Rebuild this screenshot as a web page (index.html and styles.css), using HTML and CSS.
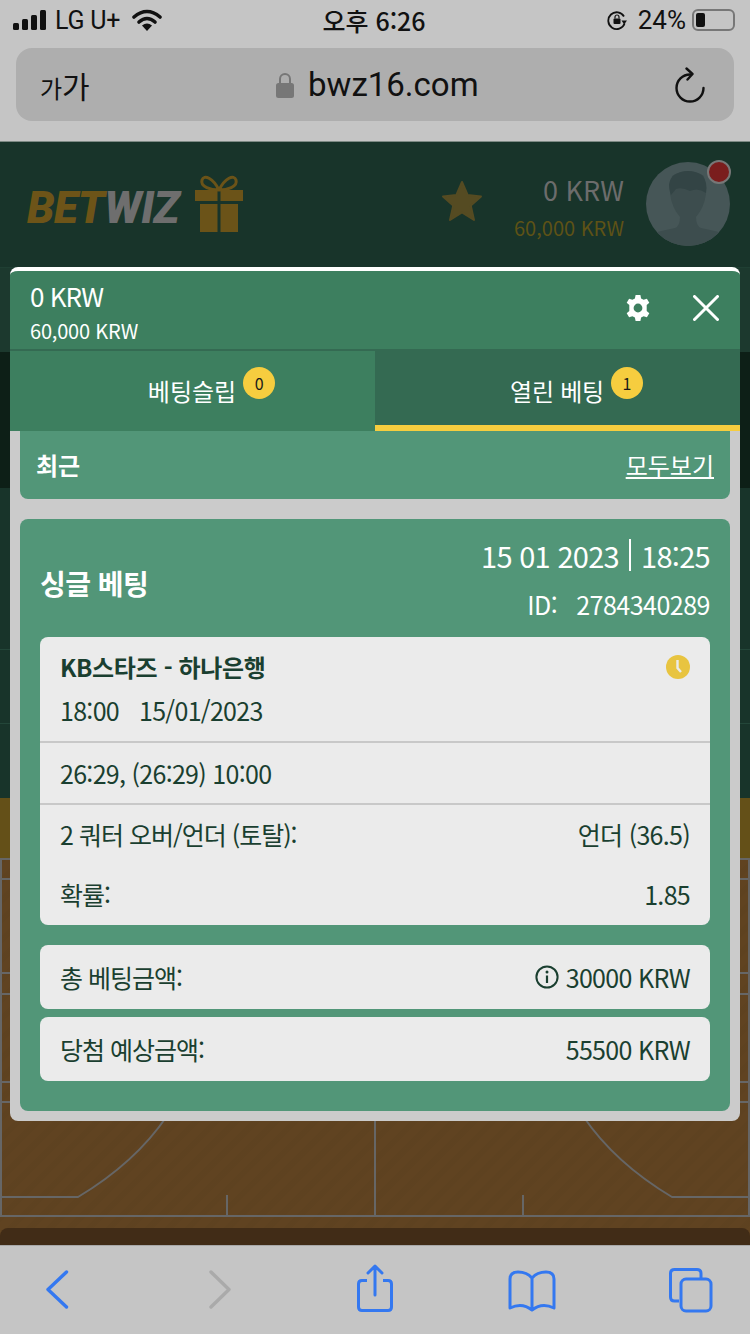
FILE: index.html
```html
<!DOCTYPE html>
<html lang="ko">
<head>
    <meta charset="UTF-8">
    <meta name="viewport" content="width=device-width, initial-scale=1.0">
    <title>BETWIZ</title>
    <link rel="stylesheet" href="styles.css">
</head>
<body>
    <div class="phone">
        <div class="browser-top">
            <div class="status-bar">
                <div class="status-left">
                    <svg class="signal" width="33" height="20" viewBox="0 0 33 20">
                        <rect x="0" y="13" width="6" height="7" rx="1.5"/>
                        <rect x="9" y="9" width="6" height="11" rx="1.5"/>
                        <rect x="18" y="5" width="6" height="15" rx="1.5"/>
                        <rect x="27" y="0" width="6" height="20" rx="1.5"/>
                    </svg>
                    <span>LG U+</span>
                    <svg class="wifi" width="30" height="22" viewBox="0 0 30 22">
                        <path d="M2 8 Q15 -3 28 8" fill="none" stroke="#111" stroke-width="3.6" stroke-linecap="round"/>
                        <path d="M7 13 Q15 6 23 13" fill="none" stroke="#111" stroke-width="3.6" stroke-linecap="round"/>
                        <path d="M15 22 L10 16.5 Q15 12.5 20 16.5 Z" fill="#111"/>
                    </svg>
                </div>
                <div class="status-time">오후 6:26</div>
                <div class="status-right">
                    <svg class="rotate-lock" width="20" height="20" viewBox="0 0 20 20">
                        <path d="M17 6.5 A8.4 8.4 0 1 0 17.6 13.5" fill="none" stroke="#111" stroke-width="1.8"/>
                        <path d="M14.5 10.5 L20 10.5 L17.2 14.5 Z" fill="#111"/>
                        <rect x="6.5" y="8.5" width="7" height="5.5" rx="1" fill="#111"/>
                        <path d="M8 8.5 V7 A2 2 0 0 1 12 7 V8.5" fill="none" stroke="#111" stroke-width="1.2"/>
                    </svg>
                    <span>24%</span>
                    <div class="battery"><div class="battery-fill"></div></div>
                </div>
            </div>
            <div class="url-bar">
                <span class="url-aa"><small>가</small>가</span>
                <div class="url-host">
                    <svg width="18" height="26" viewBox="0 0 18 26">
                        <path d="M4 12 V7 A5 5 0 0 1 14 7 V12" fill="none" stroke="#777" stroke-width="2"/>
                        <rect x="0" y="11" width="18" height="15" rx="2.5" fill="#777"/>
                    </svg>
                    <span>bwz16.com</span>
                </div>
                <svg class="reload" width="30" height="36" viewBox="0 0 30 36">
                    <path d="M15 7.5 A13.5 13.5 0 1 0 28.5 21" fill="none" stroke="#111" stroke-width="2.4" stroke-linecap="round"/>
                    <path d="M11.5 1.5 L17.5 7 L12.5 12.5" fill="none" stroke="#111" stroke-width="2.4" stroke-linecap="round" stroke-linejoin="round"/>
                </svg>
            </div>
        </div>

        <div class="site">
            <header class="site-header">
                <div class="logo">
                    <span class="logo-text"><span class="logo-bet">BET</span>WIZ</span>
                    <svg class="gift" width="48" height="58" viewBox="0 0 48 58">
                        <path d="M24 15 C18 3 9 -1 7 5 C5 12 16 15 24 15 C32 15 43 12 41 5 C39 -1 30 3 24 15" fill="none" stroke="#6b5318" stroke-width="3"/>
                        <rect x="0" y="15" width="22.5" height="11" fill="#6b5318"/>
                        <rect x="25.5" y="15" width="22.5" height="11" fill="#6b5318"/>
                        <rect x="5" y="29" width="17.5" height="28" fill="#6b5318"/>
                        <rect x="25.5" y="29" width="17.5" height="28" fill="#6b5318"/>
                    </svg>
                </div>
                <div class="account">
                    <svg class="fav" width="42" height="42" viewBox="0 0 42 42">
                        <path d="M21 2 L26.6 15 L40 16.4 L29.8 25.6 L33 40 L21 32.4 L9 40 L12.2 25.6 L2 16.4 L15.4 15 Z" fill="#554b22" stroke="#554b22" stroke-width="2" stroke-linejoin="round"/>
                    </svg>
                    <div class="account-money">
                        <div class="account-real">0 KRW</div>
                        <div class="account-bonus">60,000 KRW</div>
                    </div>
                    <div class="avatar">
                        <svg width="84" height="84" viewBox="0 0 84 84">
                            <path d="M0 84 V74 Q12 69 29 66 Q34 64 34 55 Q26 46 24 32 L26 14 Q42 4 58 14 L60 32 Q58 46 50 55 Q50 64 55 66 Q72 69 84 74 V84 Z" fill="#3d4d4e"/>
                            <path d="M25 33 Q20 20 28 13 Q42 5 56 13 Q62 20 60 31 Q52 25 44 29 Q36 25 30 27 Z" fill="#334445"/>
                        </svg>
                        <span class="avatar-dot"></span>
                    </div>
                </div>
            </header>
            <div class="band band-soft"></div>
            <div class="band band-dark"></div>
            <div class="band band-row band-row-short"></div>
            <div class="band band-row"></div>
            <div class="band band-last"></div>
            <div class="band band-olive"></div>
            <div class="court">
                <svg width="750" height="387" viewBox="0 0 750 387">
                    <g fill="none" stroke="#666" stroke-width="2">
                        <path d="M1 0 V358"/>
                        <path d="M749 0 V358"/>
                        <path d="M0 1 H750"/>
                        <path d="M0 21 H12 M738 21 H750"/>
                        <path d="M0 115 H12 M738 115 H750"/>
                        <path d="M0 136 H12 M738 136 H750"/>
                        <path d="M0 224 H12 M738 224 H750"/>
                        <path d="M0 244 H12 M738 244 H750"/>
                        <path d="M0 358 H750"/>
                        <path d="M375 250 V358"/>
                        <path d="M227 337 V358"/>
                        <path d="M523 337 V358"/>
                        <path d="M0 339 H78 Q135 305 167 258"/>
                        <path d="M750 339 H672 Q615 305 583 258"/>
                    </g>
                </svg>
                <div class="court-panel"></div>
            </div>

            <aside class="slip">
                <div class="slip-head">
                    <div class="slip-money">
                        <div class="slip-real">0 KRW</div>
                        <div class="slip-bonus">60,000 KRW</div>
                    </div>
                    <div class="slip-actions">
                        <svg width="26" height="26" viewBox="0 0 26 26">
                            <path fill="#fff" fill-rule="evenodd" d="M10.6 0 H15.4 L16.1 3.4 L18.6 4.8 L21.9 3.7 L24.3 7.8 L21.7 10.1 V13 V15.9 L24.3 18.2 L21.9 22.3 L18.6 21.2 L16.1 22.6 L15.4 26 H10.6 L9.9 22.6 L7.4 21.2 L4.1 22.3 L1.7 18.2 L4.3 15.9 V10.1 L1.7 7.8 L4.1 3.7 L7.4 4.8 L9.9 3.4 Z M13 8.6 A4.4 4.4 0 1 0 13 17.4 A4.4 4.4 0 1 0 13 8.6 Z"/>
                        </svg>
                        <svg width="26" height="26" viewBox="0 0 26 26">
                            <path d="M1.5 1.5 L24.5 24.5 M24.5 1.5 L1.5 24.5" stroke="#fff" stroke-width="3" stroke-linecap="round"/>
                        </svg>
                    </div>
                </div>
                <div class="slip-tabs">
                    <div class="slip-tab">
                        <span>베팅슬립</span>
                        <span class="tab-count">0</span>
                    </div>
                    <div class="slip-tab slip-tab-active">
                        <span>열린 베팅</span>
                        <span class="tab-count">1</span>
                    </div>
                </div>
                <div class="slip-body">
                    <div class="recent">
                        <strong>최근</strong>
                        <a href="#">모두보기</a>
                    </div>
                    <div class="bet-card">
                        <div class="bet-head">
                            <h2>싱글 베팅</h2>
                            <div class="bet-meta">
                                <div class="bet-date">15 01 2023 <i></i> 18:25</div>
                                <div class="bet-id"><span>ID:</span><span>2784340289</span></div>
                            </div>
                        </div>
                        <div class="bet-detail">
                            <div class="bet-match">
                                <div class="match-top">
                                    <strong>KB스타즈 - 하나은행</strong>
                                    <svg width="24" height="24" viewBox="0 0 24 24">
                                        <circle cx="12" cy="12" r="12" fill="#e8c440"/>
                                        <path d="M11.5 5 V13 L15 17" fill="none" stroke="#ebebeb" stroke-width="2.4"/>
                                    </svg>
                                </div>
                                <div class="match-time"><span>18:00</span><span>15/01/2023</span></div>
                            </div>
                            <div class="bet-score">26:29, (26:29) 10:00</div>
                            <div class="bet-lines">
                                <div class="line-row"><span>2 쿼터 오버/언더 (토탈):</span><span>언더 (36.5)</span></div>
                                <div class="line-row"><span>확률:</span><span>1.85</span></div>
                            </div>
                        </div>
                        <div class="bet-sum bet-sum-first">
                            <span>총 베팅금액:</span>
                            <span class="sum-value">
                                <svg width="24" height="24" viewBox="0 0 24 24">
                                    <circle cx="12" cy="12" r="10.6" fill="none" stroke="#1a3f30" stroke-width="2"/>
                                    <path d="M12 10.5 V18" stroke="#1a3f30" stroke-width="2.2"/>
                                    <circle cx="12" cy="7" r="1.5" fill="#1a3f30"/>
                                </svg>
                                30000 KRW
                            </span>
                        </div>
                        <div class="bet-sum">
                            <span>당첨 예상금액:</span>
                            <span class="sum-value">55500 KRW</span>
                        </div>
                    </div>
                </div>
            </aside>
        </div>

        <nav class="browser-bottom">
            <svg width="60" height="60" viewBox="0 0 60 60">
                <path d="M39.5 11 L21 28.5 L39.5 46" fill="none" stroke="#3478f0" stroke-width="3.4" stroke-linecap="round" stroke-linejoin="round"/>
            </svg>
            <svg width="60" height="60" viewBox="0 0 60 60">
                <path d="M26 11 L44 28.5 L26 46" fill="none" stroke="#aaa" stroke-width="3.4" stroke-linecap="round" stroke-linejoin="round"/>
            </svg>
            <svg width="60" height="60" viewBox="0 0 60 60">
                <path d="M23 19.5 H18 Q14.5 19.5 14.5 23 V46 Q14.5 49.5 18 49.5 H44 Q47.5 49.5 47.5 46 V23 Q47.5 19.5 44 19.5 H39" fill="none" stroke="#3478f0" stroke-width="3"/>
                <path d="M31 34 V5 M24 12 L31 5 L38 12" fill="none" stroke="#3478f0" stroke-width="3" stroke-linecap="round" stroke-linejoin="round"/>
            </svg>
            <svg width="60" height="60" viewBox="0 0 60 60">
                <path d="M30 17 Q25 11 16 11 Q8 11 8 18 V47 Q20 41 30 49 Q40 41 52 47 V18 Q52 11 44 11 Q35 11 30 17 Z M30 17 V49" fill="none" stroke="#3478f0" stroke-width="3" stroke-linejoin="round"/>
            </svg>
            <svg width="60" height="60" viewBox="0 0 60 60">
                <path d="M19 40 H14.5 Q10.5 40 10.5 36 V12.5 Q10.5 8.5 14.5 8.5 H37 Q41 8.5 41 12.5 V17" fill="none" stroke="#3478f0" stroke-width="3"/>
                <rect x="21" y="18" width="30" height="32" rx="5" fill="none" stroke="#3478f0" stroke-width="3"/>
            </svg>
        </nav>
    </div>
</body>
</html>
```

FILE: styles.css
```css
* {
    box-sizing: border-box;
}

body {
    margin: 0;
    font-family: "Noto Sans CJK KR", "Noto Sans", sans-serif;
    color: #1a3f30;
}

.phone {
    width: 750px;
    height: 1334px;
    overflow: hidden;
    display: flex;
    flex-direction: column;
}

/* browser chrome, top */
.browser-top {
    height: 141px;
    background-color: #c5c5c5;
    padding: 0 16px;
    color: #111;
}

.status-bar {
    height: 48px;
    padding-bottom: 8px;
    display: flex;
    align-items: center;
    justify-content: space-between;
    font-family: Roboto, "Noto Sans CJK KR", sans-serif;
    font-size: 25px;
}

.status-left {
    display: flex;
    align-items: center;
    margin-left: -3px;
    width: 240px;
}

.signal {
    fill: #111;
    margin-right: 9px;
}

.status-left span {
    letter-spacing: -0.2px;
}

.wifi {
    margin-left: 12px;
}

.status-time {
    font-weight: 500;
    font-family: "Noto Sans CJK KR", Roboto, sans-serif;
    font-size: 25px;
}

.status-right {
    display: flex;
    align-items: center;
    justify-content: flex-end;
    width: 240px;
    margin-right: -1px;
    font-size: 26px;
}

.rotate-lock {
    margin-right: 11px;
}

.battery {
    width: 43px;
    height: 22px;
    margin-left: 6px;
    border: 2px solid #777;
    border-radius: 6px;
    padding: 2px;
}

.battery-fill {
    width: 9px;
    height: 100%;
    background-color: #111;
    border-radius: 2px;
}

.url-bar {
    height: 73px;
    background-color: #aeaeae;
    border-radius: 16px;
    padding: 0 29px 0 24px;
    display: flex;
    align-items: center;
    justify-content: space-between;
}

.url-aa {
    font-size: 30px;
}

.url-aa small {
    font-size: 24px;
}

.url-host {
    display: flex;
    align-items: center;
    gap: 14px;
    margin-left: -10px;
    font-family: Roboto, sans-serif;
    font-size: 33px;
}

.reload {
    display: block;
}

/* dimmed site behind the slip */
.site {
    position: relative;
    height: 1104px;
    background-color: #18342a;
    border-top: 1px solid #7d8a84;
}

.site-header {
    height: 125px;
    padding: 20px 20px 0 27px;
    display: flex;
    justify-content: space-between;
}

.logo {
    display: flex;
    align-items: flex-start;
    gap: 16px;
    padding-top: 13px;
}

.logo-text {
    margin-top: 11px;
    font-family: Roboto, sans-serif;
    font-size: 44px;
    line-height: 44px;
    font-weight: 900;
    font-style: italic;
    color: #6e6e6e;
    letter-spacing: -0.5px;
}

.logo-bet {
    color: #6d5418;
}

.account {
    display: flex;
    align-items: flex-start;
}

.fav {
    margin: 18px 31px 0 0;
}

.account-money {
    text-align: right;
    padding-top: 8px;
}

.account-real {
    font-size: 27px;
    line-height: 40px;
    color: #6c6c6c;
}

.account-bonus {
    font-size: 20px;
    line-height: 36px;
    color: #5e5216;
}

.avatar {
    position: relative;
    width: 84px;
    height: 84px;
    margin-left: 22px;
    border-radius: 50%;
    background-color: #465657;
}

.avatar svg {
    display: block;
    border-radius: 50%;
}

.avatar-dot {
    position: absolute;
    top: -2px;
    right: -1px;
    width: 24px;
    height: 24px;
    border-radius: 50%;
    background-color: #7a1d1d;
    border: 2px solid #777;
}

.band-soft {
    height: 85px;
    background-color: #1c392e;
    border-top: 1px solid #1f3f33;
}

.band-dark {
    height: 136px;
    background-color: #0d1f17;
}

.band-row {
    height: 74px;
    border-bottom: 1px solid #234639;
}

.band-row-short {
    height: 162px;
    background-color: #18342a;
}

.band-last {
    height: 74px;
}

.band-olive {
    height: 60px;
    background-color: #645018;
}

.court {
    position: relative;
    height: 387px;
    background-color: #604321;
    background-image: repeating-linear-gradient(135deg, rgba(0, 0, 0, 0.02) 0 6px, transparent 6px 14px);
}

.court svg {
    display: block;
}

.court-panel {
    position: absolute;
    left: 0;
    right: 0;
    bottom: 0;
    height: 17px;
    background-color: #412c17;
    border-radius: 8px 8px 0 0;
}

/* bet slip */
.slip {
    position: absolute;
    top: 125px;
    left: 10px;
    width: 730px;
    color: #fff;
}

.slip-head {
    height: 82px;
    padding: 6px 20px 0;
    background-color: #3d7f5f;
    border-top: 4px solid #fff;
    border-radius: 8px 8px 0 0;
    display: flex;
    justify-content: space-between;
}

.slip-real {
    font-size: 26px;
    line-height: 38px;
    letter-spacing: -1px;
}

.slip-bonus {
    font-size: 20px;
    line-height: 28px;
    margin-top: 2px;
    letter-spacing: -0.2px;
}

.slip-actions {
    display: flex;
    align-items: center;
    gap: 42px;
    height: 44px;
    margin-top: 9px;
    margin-right: 1px;
}

.slip-tabs {
    display: flex;
    height: 82px;
}

.slip-tab {
    width: 50%;
    display: flex;
    justify-content: center;
    background-color: #3d7f5f;
    border-top: 2px solid #346a52;
    font-size: 24px;
    line-height: 80px;
    padding-left: 38px;
}

.slip-tab-active {
    background-color: #346a52;
    border-bottom: 6px solid #f6cd3f;
    letter-spacing: -0.25px;
}

.tab-count {
    width: 32px;
    height: 32px;
    margin: 16px 0 0 7px;
    border-radius: 50%;
    background-color: #f6cd3f;
    color: #1a1a1a;
    font-size: 16px;
    line-height: 32px;
    text-align: center;
}

.slip-body {
    padding: 0 10px 10px;
    background-color: #cbcbcb;
    border-radius: 0 0 8px 8px;
}

.recent {
    height: 68px;
    padding: 0 16px 2px;
    background-color: #529678;
    border-radius: 0 0 8px 8px;
    display: flex;
    align-items: center;
    justify-content: space-between;
    font-size: 24px;
}

.recent a {
    color: #fff;
}

.bet-card {
    margin-top: 20px;
    padding: 18px 20px 30px;
    background-color: #529678;
    border-radius: 8px;
}

.bet-head {
    display: flex;
    justify-content: space-between;
    align-items: flex-start;
    height: 100px;
}

.bet-head h2 {
    margin: 27px 0 0;
    font-size: 28px;
    line-height: 38px;
    letter-spacing: -0.5px;
    font-weight: 700;
}

.bet-meta {
    text-align: right;
}

.bet-date {
    font-size: 29px;
    line-height: 36px;
    letter-spacing: -0.7px;
    display: flex;
    align-items: center;
    gap: 10px;
}

.bet-date i {
    width: 2px;
    height: 32px;
    background-color: #fff;
}

.bet-id {
    margin-top: 13px;
    font-size: 25px;
    line-height: 36px;
    letter-spacing: -0.5px;
    display: flex;
    justify-content: flex-end;
    gap: 19px;
}

.bet-detail {
    background-color: #ebebeb;
    border-radius: 8px;
    color: #1a3f30;
    font-size: 25px;
    letter-spacing: -0.7px;
}

.bet-match {
    height: 106px;
    padding: 12px 20px 0;
    border-bottom: 2px solid #c8c8c8;
}

.match-top {
    display: flex;
    justify-content: space-between;
    align-items: flex-start;
}

.match-top strong {
    font-size: 24px;
    line-height: 36px;
    letter-spacing: -0.35px;
}

.match-top svg {
    margin-top: 6px;
}

.match-time {
    display: flex;
    gap: 20px;
    margin-top: 7px;
    line-height: 36px;
}

.bet-score {
    height: 62px;
    padding: 0 20px;
    line-height: 60px;
    border-bottom: 2px solid #c8c8c8;
}

.bet-lines {
    padding: 0 20px;
}

.line-row {
    height: 60px;
    padding-bottom: 2px;
    display: flex;
    justify-content: space-between;
    align-items: center;
}

.line-row span:first-child,
.bet-sum > span:first-child {
    letter-spacing: -1px;
}

.bet-sum {
    height: 64px;
    margin-top: 8px;
    padding: 0 20px;
    background-color: #ebebeb;
    border-radius: 8px;
    color: #1a3f30;
    font-size: 25px;
    letter-spacing: -0.7px;
    display: flex;
    align-items: center;
    justify-content: space-between;
}

.bet-sum-first {
    margin-top: 20px;
}

.sum-value {
    display: flex;
    align-items: center;
    gap: 7px;
}

/* browser chrome, bottom */
.browser-bottom {
    height: 89px;
    padding: 15px 30px 0 27px;
    background-color: #c5c5c5;
    border-top: 1px solid #a8a8a8;
    display: flex;
    justify-content: space-between;
    align-items: flex-start;
}
```
